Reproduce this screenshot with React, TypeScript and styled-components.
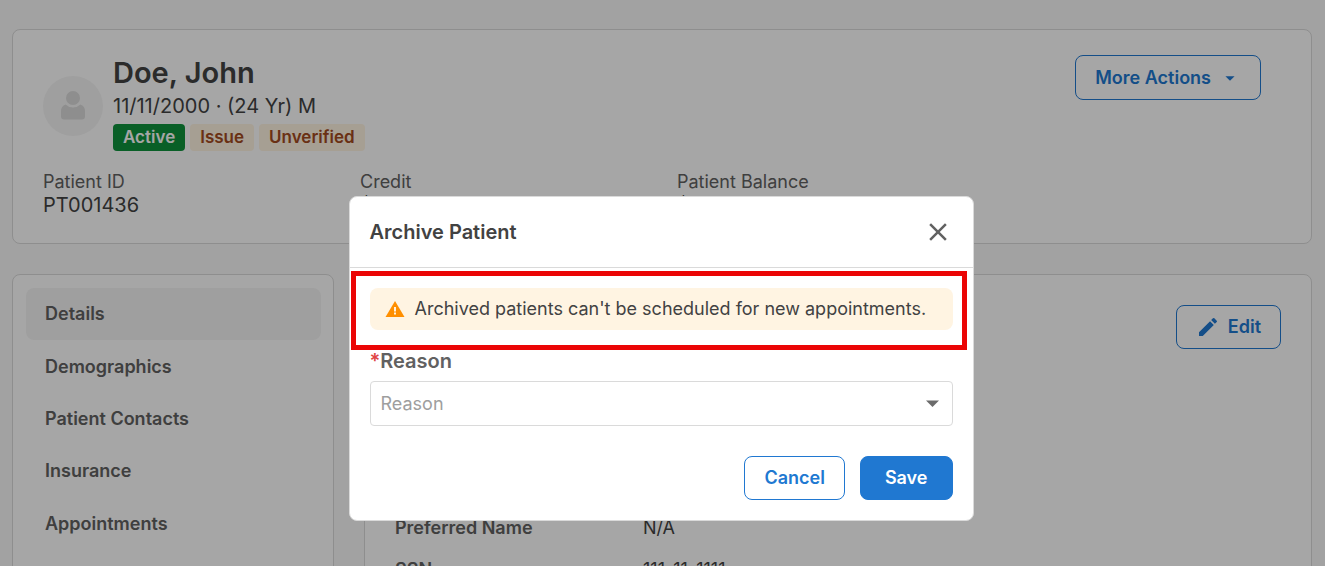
import React from 'react';
import styled, { createGlobalStyle, css } from 'styled-components';

const color = {
  page: '#f9f9f9',
  line: '#dadada',
  ink: '#424242',
  text: '#616161',
  muted: '#9e9e9e',
  blue: '#2078d1',
  warnBg: '#fff4e2',
};

const GlobalStyle = createGlobalStyle`
  *, *::before, *::after { box-sizing: border-box; }
  body {
    margin: 0;
    overflow: hidden;
    background: ${color.page};
    color: ${color.ink};
    font-family: Inter, "Liberation Sans", sans-serif;
    font-size: 18px;
    line-height: 22px;
  }
  button, select { font: inherit; }
  h1, h2, p, dl, dd { margin: 0; }
`;

const Page = styled.main`
  display: flex;
  flex-direction: column;
  gap: 30px;
  min-height: 100vh;
  padding: 29px 13px 30px 12px;
`;

const Card = styled.section`
  background: #fff;
  border: 1px solid ${color.line};
  border-radius: 8px;
`;

const SummaryCard = styled(Card)`
  padding: 25px 0 26px 30px;
`;

const SummaryHeader = styled.header`
  display: flex;
  justify-content: space-between;
  align-items: flex-start;
  padding-right: 50px;
`;

const Person = styled.div`
  display: flex;
  align-items: center;
  gap: 10px;
`;

const Avatar = styled.div`
  display: flex;
  align-items: center;
  justify-content: center;
  width: 60px;
  height: 60px;
  border-radius: 50%;
  background: #f5f5f5;
`;

const PersonInfo = styled.div`
  display: flex;
  flex-direction: column;
  padding-bottom: 6px;
`;

const PersonName = styled.h1`
  font-size: 29px;
  line-height: 36px;
  font-weight: 600;
`;

const PersonMeta = styled.p`
  font-size: 20px;
  line-height: 30px;
`;

const Tags = styled.div`
  display: flex;
  gap: 5px;
  padding-top: 3px;
`;

const Tag = styled.span<{ $tone: 'success' | 'warning' }>`
  height: 27px;
  padding: 0 10px;
  border-radius: 4px;
  line-height: 26px;
  font-size: 17px;
  font-weight: 600;
  ${({ $tone }) =>
    $tone === 'success'
      ? css`background: #0f923c; color: #fff;`
      : css`background: ${color.warnBg}; color: #a34a20;`}
`;

const Button = styled.button<{ $primary?: boolean }>`
  display: inline-flex;
  align-items: center;
  justify-content: center;
  gap: 8px;
  height: 44px;
  padding: 0 ${({ $primary }) => ($primary ? 24 : 19)}px;
  border: 1px solid ${color.blue};
  border-radius: 8px;
  background: ${({ $primary }) => ($primary ? color.blue : '#fff')};
  color: ${({ $primary }) => ($primary ? '#fff' : color.blue)};
  font-weight: 600;
  cursor: pointer;
`;

const MenuButton = styled(Button)`
  height: 45px;
`;

const Metrics = styled.dl`
  display: grid;
  grid-template-columns: repeat(4, 1fr);
  padding-top: 14px;
`;

const MetricLabel = styled.dt`
  color: ${color.text};
`;

const MetricValue = styled.dd`
  font-size: 20px;
  line-height: 24px;
`;

const Columns = styled.div`
  display: grid;
  grid-template-columns: 322px 1fr;
  gap: 30px;
  flex: 1;
`;

const SideNav = styled(Card).attrs({ as: 'nav' })`
  padding: 13px 12px 40px 13px;
`;

const NavList = styled.div`
  display: grid;
  grid-auto-rows: 1fr;
  height: 262px;
`;

const NavLink = styled.a<{ $active?: boolean }>`
  display: flex;
  align-items: center;
  padding: 0 19px;
  border-radius: 8px;
  background: ${({ $active }) => ($active ? '#f5f5f5' : 'transparent')};
  color: ${color.text};
  font-weight: 600;
  text-decoration: none;
`;

const DetailsCard = styled(Card)`
  padding: 30px;
`;

const DetailsToolbar = styled.div`
  display: flex;
  justify-content: flex-end;
  padding-bottom: 158px;
`;

const DetailRow = styled.div`
  display: grid;
  grid-template-columns: 248px 1fr;
  align-items: center;
  height: 42px;
`;

const DetailLabel = styled.dt`
  color: ${color.text};
  font-weight: 600;
`;

const Overlay = styled.div`
  position: fixed;
  inset: 0;
  display: flex;
  align-items: flex-start;
  justify-content: center;
  padding: 196px 15px 0 12px;
  background: rgba(0, 0, 0, 0.35);
`;

const Dialog = styled.div`
  width: 100%;
  max-width: 625px;
  border: 1px solid ${color.line};
  border-radius: 8px;
  background: #fff;
`;

const DialogHeader = styled.header`
  display: flex;
  align-items: center;
  justify-content: space-between;
  height: 71px;
  padding: 0 20px;
  border-bottom: 1px solid ${color.line};
`;

const DialogTitle = styled.h2`
  font-size: 20px;
  line-height: 24px;
  font-weight: 600;
`;

const CloseButton = styled.button`
  display: flex;
  padding: 0;
  border: 0;
  background: none;
  color: ${color.text};
  cursor: pointer;
`;

const DialogBody = styled.div`
  padding: 20px;
`;

const Notice = styled.div`
  position: relative;
  display: flex;
  align-items: center;
  gap: 10px;
  height: 42px;
  padding: 0 15px;
  border-radius: 8px;
  background: ${color.warnBg};
`;

const Highlight = styled.div`
  position: absolute;
  inset: -17px -14px -20px -19px;
  border: 5px solid #eb0505;
  pointer-events: none;
`;

const FieldLabel = styled.label`
  display: block;
  padding: 19px 0 8px;
  color: ${color.text};
  font-size: 20px;
  line-height: 24px;
  font-weight: 600;
`;

const Required = styled.span`
  color: #e04444;
`;

const SelectBox = styled.div`
  position: relative;
  display: flex;
  align-items: center;
  margin-bottom: 30px;

  svg {
    position: absolute;
    right: 14px;
    pointer-events: none;
  }
`;

const Select = styled.select`
  width: 100%;
  height: 45px;
  padding: 0 40px 0 10px;
  border: 1px solid ${color.line};
  border-radius: 4px;
  background: #fff;
  color: ${color.muted};
  appearance: none;
`;

const Actions = styled.footer`
  display: flex;
  justify-content: flex-end;
  gap: 15px;
`;

const navItems = ['Details', 'Demographics', 'Patient Contacts', 'Insurance', 'Appointments'];

const metrics = [
  ['Patient ID', 'PT001436'],
  ['Credit', '$0.00'],
  ['Patient Balance', '$0.00'],
];

const details = [
  ['Preferred Name', 'N/A'],
  ['SSN', '111-11-1111'],
];

export default function App() {
  return (
    <>
      <GlobalStyle />
      <Page>
        <SummaryCard>
          <SummaryHeader>
            <Person>
              <Avatar>
                <svg width="26" height="30" viewBox="0 0 26 30" fill="#dadada" aria-hidden="true">
                  <circle cx="13" cy="7" r="7" />
                  <path d="M5.600 13.600a10.600 10.600 0 0 0 14.800 0Q25 15.200 25 20v5.500q0 3-3 3H4q-3 0-3-3V20q0-4.800 4.600-6.400z" />
                </svg>
              </Avatar>
              <PersonInfo>
                <PersonName>Doe, John</PersonName>
                <PersonMeta>11/11/2000 · (24 Yr) M</PersonMeta>
                <Tags>
                  <Tag $tone="success">Active</Tag>
                  <Tag $tone="warning">Issue</Tag>
                  <Tag $tone="warning">Unverified</Tag>
                </Tags>
              </PersonInfo>
            </Person>
            <MenuButton type="button">
              More Actions
              <svg width="22" height="22" viewBox="0 0 24 24" fill="currentColor" aria-hidden="true">
                <path d="M7 10l5 5 5-5z" />
              </svg>
            </MenuButton>
          </SummaryHeader>
          <Metrics>
            {metrics.map(([label, value]) => (
              <div key={label}>
                <MetricLabel>{label}</MetricLabel>
                <MetricValue>{value}</MetricValue>
              </div>
            ))}
          </Metrics>
        </SummaryCard>

        <Columns>
          <SideNav>
            <NavList>
              {navItems.map((item, i) => (
                <NavLink key={item} href="#" $active={i === 0}>
                  {item}
                </NavLink>
              ))}
            </NavList>
          </SideNav>
          <DetailsCard>
            <DetailsToolbar>
              <Button type="button">
                <svg width="24" height="24" viewBox="0 0 24 24" fill="currentColor" aria-hidden="true">
                  <path d="M3 17.250V21h3.750L17.810 9.940l-3.750-3.750L3 17.250zM20.710 7.040a1 1 0 0 0 0-1.410l-2.340-2.340a1 1 0 0 0-1.410 0l-1.830 1.830 3.750 3.750 1.830-1.830z" />
                </svg>
                Edit
              </Button>
            </DetailsToolbar>
            <dl>
              {details.map(([label, value]) => (
                <DetailRow key={label}>
                  <DetailLabel>{label}</DetailLabel>
                  <dd>{value}</dd>
                </DetailRow>
              ))}
            </dl>
          </DetailsCard>
        </Columns>
      </Page>

      <Overlay>
        <Dialog role="dialog" aria-modal="true" aria-labelledby="archive-title">
          <DialogHeader>
            <DialogTitle id="archive-title">Archive Patient</DialogTitle>
            <CloseButton type="button" aria-label="Close">
              <svg width="30" height="30" viewBox="0 0 24 24" fill="currentColor" aria-hidden="true">
                <path d="M19 6.410L17.590 5 12 10.590 6.410 5 5 6.410 10.590 12 5 17.590 6.410 19 12 13.410 17.590 19 19 17.590 13.410 12z" />
              </svg>
            </CloseButton>
          </DialogHeader>
          <DialogBody>
            <Notice role="alert">
              <svg width="20" height="18" viewBox="0 0 20 18" aria-hidden="true">
                <path d="M10 1L19.500 17H.5z" fill="#ff8f00" />
                <path d="M9 7h2v4.500H9zM9 12.500h2v2H9z" fill="#fff3e0" />
              </svg>
              <span>Archived patients can't be scheduled for new appointments.</span>
              <Highlight />
            </Notice>
            <FieldLabel htmlFor="reason">
              <Required>*</Required>Reason
            </FieldLabel>
            <SelectBox>
              <Select id="reason" defaultValue="">
                <option value="">Reason</option>
              </Select>
              <svg width="13" height="7" viewBox="0 0 13 7" fill="#6b6b6b" aria-hidden="true">
                <path d="M0 .5h13l-6.500 6.500z" />
              </svg>
            </SelectBox>
            <Actions>
              <Button type="button">Cancel</Button>
              <Button type="button" $primary>
                Save
              </Button>
            </Actions>
          </DialogBody>
        </Dialog>
      </Overlay>
    </>
  );
}
